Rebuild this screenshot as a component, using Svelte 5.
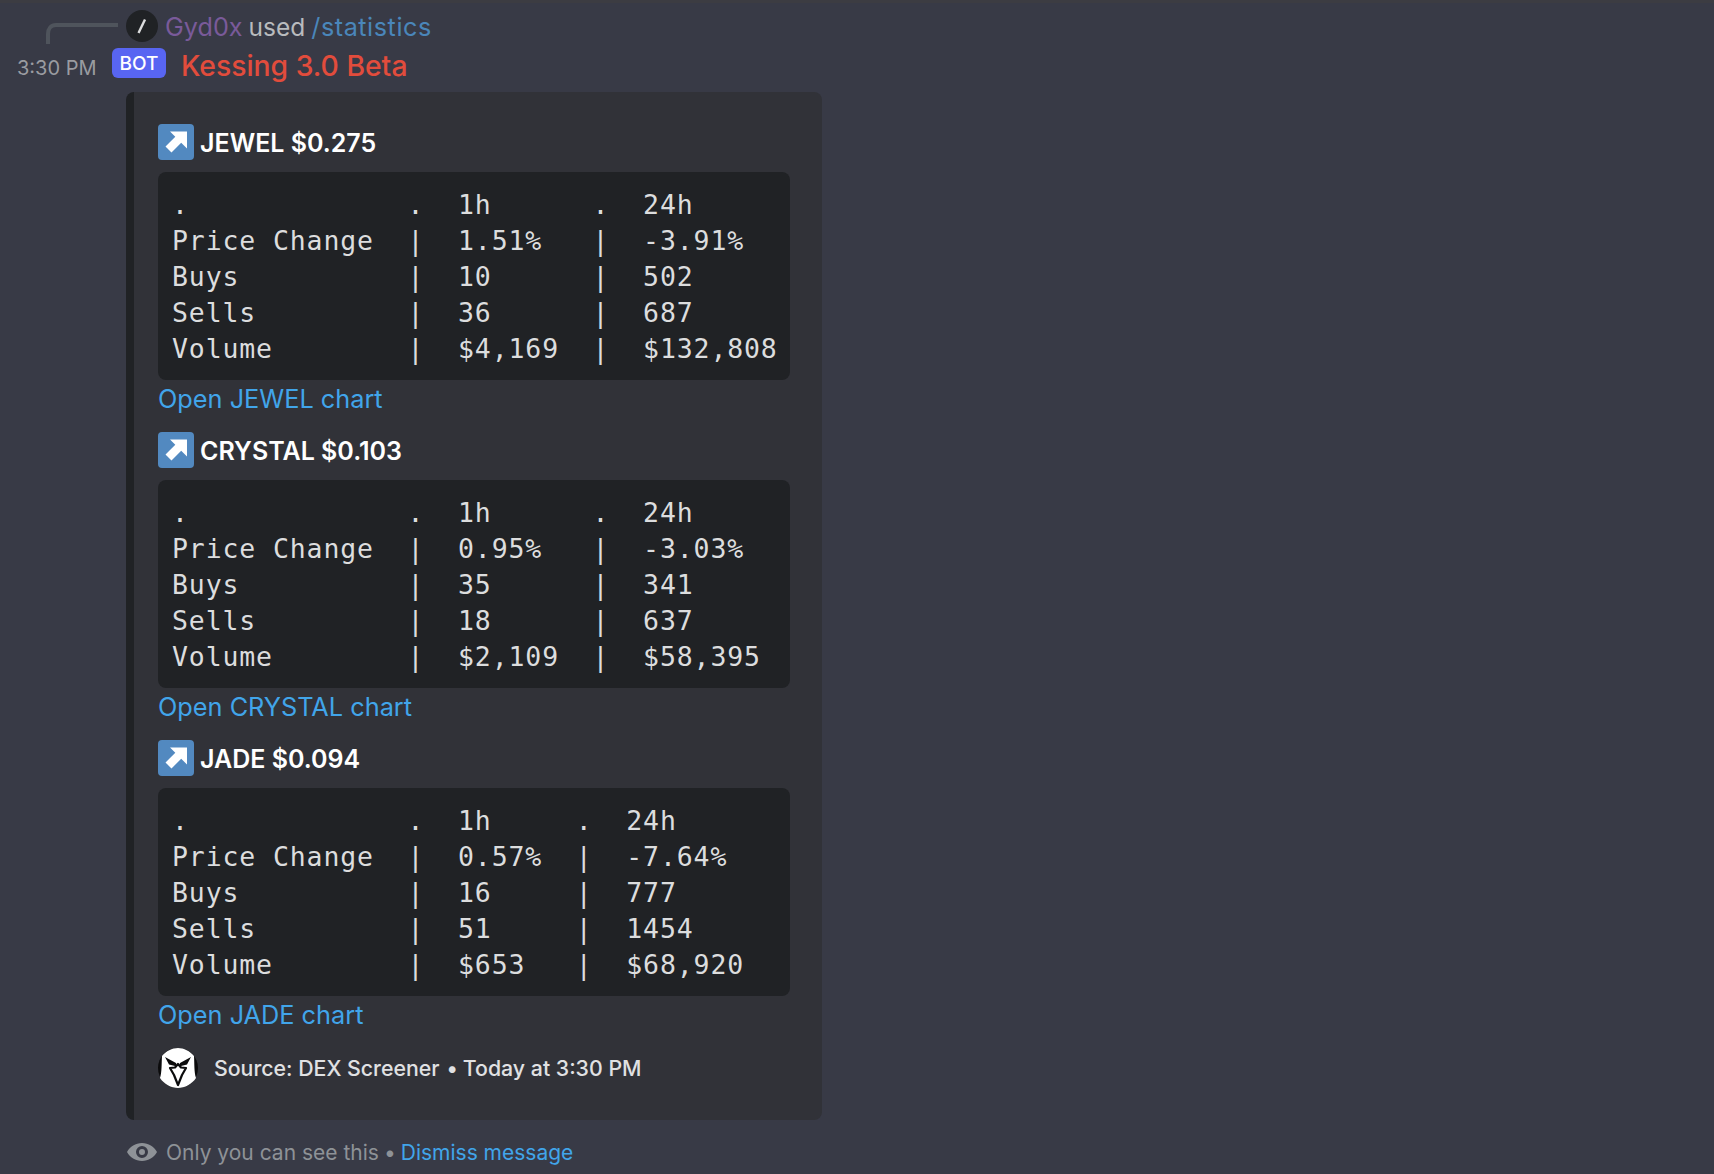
<script>
  const sections = [
    { name: 'JEWEL', price: '$0.275', lines: ['.             .  1h      .  24h', 'Price Change  |  1.51%   |  -3.91%', 'Buys          |  10      |  502', 'Sells         |  36      |  687', 'Volume        |  $4,169  |  $132,808'] },
    { name: 'CRYSTAL', price: '$0.103', lines: ['.             .  1h      .  24h', 'Price Change  |  0.95%   |  -3.03%', 'Buys          |  35      |  341', 'Sells         |  18      |  637', 'Volume        |  $2,109  |  $58,395'] },
    { name: 'JADE', price: '$0.094', lines: ['.             .  1h     .  24h', 'Price Change  |  0.57%  |  -7.64%', 'Buys          |  16     |  777', 'Sells         |  51     |  1454', 'Volume        |  $653   |  $68,920'] }
  ];
</script>

<div class="page">
  <div class="topline"></div>
  <div class="reply">
    <div class="spine-slot">
      <svg class="spine" width="72" height="28" viewBox="0 0 72 28" fill="none">
        <path d="M2 24V14C2 9 5 5 10 5H72" stroke="#4f545c" stroke-width="4"/>
      </svg>
    </div>
    <span class="cmd-icon">
      <svg width="32" height="32" viewBox="0 0 32 32"><circle cx="16" cy="16" r="16" fill="#202225"/><path d="M12.500 23L19 9.500" stroke="#dcddde" stroke-width="2.400"/></svg>
    </span>
    <span class="user">Gyd0x</span>
    <span class="used">used</span>
    <span class="command">/statistics</span>
  </div>
  <div class="author">
    <time>3:30 PM</time>
    <span class="badge">BOT</span>
    <span class="bot-name">Kessing 3.0 Beta</span>
  </div>
  <article class="embed">
    {#each sections as s}
      <section class="field">
        <h3>
          <svg class="arrow" width="36" height="36" viewBox="0 0 36 36">
            <rect width="36" height="36" rx="4" fill="#5289c0"/>
            <path d="M12 7.500H29V24.500L23.200 18.700L13.500 28.500L7.500 22.500L17.300 12.800Z" fill="#fff"/>
          </svg>
          <span>{s.name} {s.price}</span>
        </h3>
        <pre>{#each s.lines as l}<code>{l}</code>{/each}</pre>
        <a href="#chart">Open {s.name} chart</a>
      </section>
    {/each}
    <footer>
      <svg class="owl" width="40" height="40" viewBox="0 0 40 40">
        <circle cx="20" cy="20" r="20" fill="#0b0b0c"/>
        <path d="M4 8C8 3 14 0 20 0C26 0 32 3 36 8C36.500 16 36 24 38 30C34 36 27 40 20 40C13 40 6 36 2 30C4 24 3.500 16 4 8Z" fill="#fff"/>
        <path d="M7 9L18 15L19 18.500L11 16.500Z M33 9L22 15L21 18.500L29 16.500Z" fill="#0b0b0c"/>
        <path d="M12 20L17 19.500L20 16L23 19.500L28 20L24 27L20 37L16 27Z" fill="#fff" stroke="#0b0b0c" stroke-width="2.200" stroke-linejoin="round"/>
      </svg>
      <span>Source: DEX Screener</span><span class="dot">•</span><span>Today at 3:30 PM</span>
    </footer>
  </article>
  <div class="ephemeral">
    <svg width="30" height="20" viewBox="0 0 30 20"><path fill-rule="evenodd" d="M15 1C8.500 1 3 4.500 0 10c3 5.500 8.500 9 15 9s12-3.500 15-9C27 4.500 21.500 1 15 1Zm0 15a6 6 0 1 1 0-12 6 6 0 0 1 0 12Zm0-3a3 3 0 1 0 0-6 3 3 0 0 0 0 6Z" fill="#8e9297"/></svg>
    <span>Only you can see this</span><span class="sep">•</span>
    <a href="#dismiss">Dismiss message</a>
  </div>
</div>

<style>
  :global(body) {
    margin: 0;
    background: #383a46;
  }
  .page {
    position: relative;
    height: 1174px;
    box-sizing: border-box;
    padding-top: 10px;
    overflow: hidden;
    font-family: Inter, "Noto Sans", sans-serif;
    background: #383a46;
  }
  .topline {
    position: absolute;
    top: 0;
    left: 0;
    right: 0;
    height: 3px;
    background: #3c3c42;
  }
  .reply {
    display: flex;
    align-items: center;
    height: 32px;
    font-size: 25.200px;
    line-height: 34px;
    white-space: nowrap;
  }
  .spine-slot {
    width: 126px;
    height: 32px;
    flex: none;
    display: flex;
    justify-content: flex-end;
    align-items: flex-end;
  }
  .spine {
    margin-right: 8px;
    margin-bottom: -6px;
  }
  .cmd-icon {
    display: flex;
    width: 32px;
    height: 32px;
    margin-right: 7px;
  }
  .user { padding-top: 2px; color: #7a5a9a; margin-right: 6px; }
  .used { padding-top: 2px; color: #b9bbbe; margin-right: 6px; font-size: 24.500px; }
  .command { padding-top: 2px; color: #4a86ba; letter-spacing: 0.550px; }
  .author {
    display: flex;
    align-items: center;
    height: 30px;
    margin-top: 6px;
    white-space: nowrap;
  }
  time {
    width: 112px;
    box-sizing: border-box;
    padding: 10px 0 0 17px;
    flex: none;
    font-size: 20px;
    color: #9a9ca1;
  }
  .badge {
    display: flex;
    align-items: center;
    justify-content: center;
    width: 54px;
    height: 30px;
    flex: none;
    margin-right: 15px;
    border-radius: 6px;
    background: #5865f2;
    color: #fff;
    font-size: 19px;
    font-weight: 500;
  }
  .bot-name {
    padding-top: 5px;
    color: #e24c3c;
    font-size: 28.300px;
    font-weight: 500;
  }
  .embed {
    box-sizing: border-box;
    width: 696px;
    margin: 14px 0 0 126px;
    padding: 32px 32px 32px 24px;
    border-left: 8px solid #202225;
    border-radius: 8px;
    background: #313238;
  }
  .field {
    margin-bottom: 16px;
  }
  h3 {
    display: flex;
    align-items: center;
    gap: 6px;
    height: 36px;
    margin: 0 0 12px;
    color: #fff;
    font-size: 25px;
    font-weight: 600;
    white-space: pre;
  }
  h3 span { padding-top: 2px; }
  .arrow { flex: none; }
  pre {
    box-sizing: border-box;
    height: 208px;
    margin: 0;
    padding: 15px 14px 14px;
    border-radius: 8px;
    background: #202225;
    color: #dcddde;
    font-family: "DejaVu Sans Mono", monospace;
    font-size: 26.500px;
    letter-spacing: 0.870px;
    line-height: 36px;
  }
  code {
    display: block;
    font-family: inherit;
    white-space: pre;
  }
  a {
    color: #41a5ea;
    text-decoration: none;
  }
  .field a {
    display: block;
    height: 36px;
    line-height: 37px;
    font-size: 25.300px;
  }
  footer {
    display: flex;
    align-items: center;
    height: 40px;
    color: #e0e1e3;
    font-size: 21.300px;
    font-weight: 500;
    white-space: pre;
  }
  .owl { flex: none; margin-right: 16px; }
  .dot { margin: 0 5px 0 7px; }
  .ephemeral {
    display: flex;
    align-items: center;
    height: 28px;
    margin: 18px 0 0 127px;
    color: #8e9297;
    font-size: 21px;
    white-space: pre;
  }
  .ephemeral svg { flex: none; margin-right: 9px; }
  .sep { margin: 0 5px 0 5px; }
</style>
